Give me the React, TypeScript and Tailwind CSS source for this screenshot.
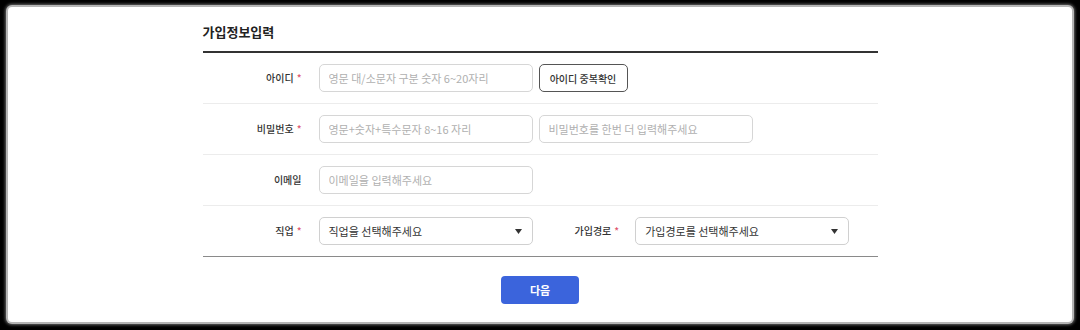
const font = { fontFamily: '"Noto Sans CJK KR", "Noto Sans", sans-serif' };

function Label({ text, required }: { text: string; required?: boolean }) {
  return (
    <span className="text-[10px] leading-[12px] font-medium text-[#333]">
      {text}
      {required && <span className="ml-[3px] text-[#e0566f]">*</span>}
    </span>
  );
}

function TextInput({ placeholder }: { placeholder: string }) {
  return (
    <input
      type="text"
      placeholder={placeholder}
      className="w-[214px] h-[28px] px-[9px] text-[11px] text-[#333] border border-[#d6d6d6] rounded-[5px] outline-none placeholder:text-[#b0b0b0] bg-white"
    />
  );
}

function SelectBox({ text }: { text: string }) {
  return (
    <div className="w-[214px] h-[28px] pl-[9px] pr-[10px] flex items-center justify-between border border-[#d0d0d0] rounded-[5px] bg-white">
      <span className="text-[11px] text-[#333]">{text}</span>
      <svg width="7" height="5" viewBox="0 0 7 5">
        <path d="M0 0h7L3.5 5z" fill="#333" />
      </svg>
    </div>
  );
}

function Row({ label, required, last, children }: { label: string; required?: boolean; last?: boolean; children: React.ReactNode }) {
  return (
    <div className={`flex items-center h-[51px] ${last ? 'border-b border-[#8a8a8a]' : 'border-b border-[#ececec]'}`}>
      <div className="w-[99px] flex justify-end items-center">
        <Label text={label} required={required} />
      </div>
      <div className="ml-[17px] flex items-center">{children}</div>
    </div>
  );
}

export default function App() {
  return (
    <div className="w-[1080px] h-[330px] bg-black pt-[7px] pl-[8px] pr-[8px] pb-[8px]" style={font}>
      <div className="w-full h-full bg-white rounded-[4px] shadow-[0_0_0_2px_#b5b5b5,0_0_3px_3px_#666]">
        <div className="mx-auto w-[675px]">
          {/* Title */}
          <div className="pt-[18px] pb-[12px] border-b-2 border-[#333]">
            <h1 className="text-[13px] leading-[14px] font-semibold text-[#222]">가입정보입력</h1>
          </div>

          {/* Form rows */}
          <Row label="아이디" required>
            <TextInput placeholder="영문 대/소문자 구분 숫자 6~20자리" />
            <button className="ml-[6px] w-[89px] h-[28px] border border-[#555] rounded-[5px] text-[10px] font-medium text-[#333] bg-white">
              아이디 중복확인
            </button>
          </Row>
          <Row label="비밀번호" required>
            <TextInput placeholder="영문+숫자+특수문자 8~16 자리" />
            <div className="ml-[6px]">
              <TextInput placeholder="비밀번호를 한번 더 입력해주세요" />
            </div>
          </Row>
          <Row label="이메일">
            <TextInput placeholder="이메일을 입력해주세요" />
          </Row>
          <Row label="직업" required last>
            <SelectBox text="직업을 선택해주세요" />
            <div className="ml-[42px] flex items-center">
              <Label text="가입경로" required />
            </div>
            <div className="ml-[16px]">
              <SelectBox text="가입경로를 선택해주세요" />
            </div>
          </Row>

          {/* Submit */}
          <div className="flex justify-center pt-[19px]">
            <button className="w-[78px] h-[28px] rounded-[4px] bg-[#3b64dc] text-white text-[11px] font-semibold">
              다음
            </button>
          </div>
        </div>
      </div>
    </div>
  );
}
